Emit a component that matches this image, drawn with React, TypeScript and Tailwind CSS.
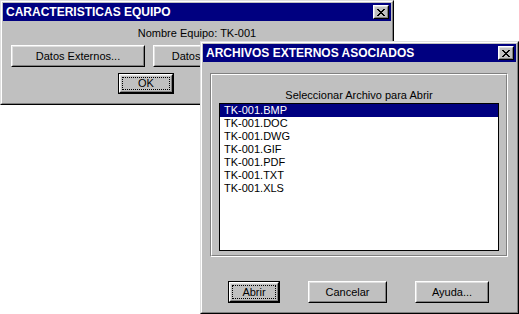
import React from "react";

function CloseBtn() {
  return (
    <div className="w-[16px] h-[14px] border border-t-white border-l-white border-r-black border-b-black bg-[#c0c0c0]">
      <div className="w-full h-full border border-t-[#dfdfdf] border-l-[#dfdfdf] border-r-[#808080] border-b-[#808080] flex items-center justify-center">
        <svg width="8" height="7" viewBox="0 0 8 7" shapeRendering="crispEdges">
          <path d="M0 0h2v1h1v1h2V1h1V0h2v1H7v1H6v1H5v1h1v1h1v1h1v1H6V6H5V5H3v1H2v1H0V6h1V5h1V4h1V3H2V2H1V1H0z" fill="#000" />
        </svg>
      </div>
    </div>
  );
}

function Win({ className, title, children }: { className: string; title: string; children: React.ReactNode }) {
  return (
    <div className={`absolute border border-t-[#dfdfdf] border-l-[#dfdfdf] border-r-black border-b-black bg-[#c0c0c0] ${className}`}>
      <div className="h-full border border-t-white border-l-white border-r-[#808080] border-b-[#808080] p-[1px] flex flex-col">
        <div className="h-[18px] shrink-0 bg-[#000080] flex items-center justify-between pl-[3px] pr-[2px]">
          <span className="text-white font-bold text-[12px] leading-[14px]">{title}</span>
          <CloseBtn />
        </div>
        <div className="flex-1 flex flex-col">{children}</div>
      </div>
    </div>
  );
}

function Button({ className, children, isDefault }: { className: string; children: React.ReactNode; isDefault?: boolean }) {
  const face = (
    <div className="w-full h-full border border-t-white border-l-white border-r-black border-b-black bg-[#c0c0c0]">
      <div className="w-full h-full border border-t-[#dfdfdf] border-l-[#dfdfdf] border-r-[#808080] border-b-[#808080] p-[1px] flex">
        {isDefault ? (
          <div className="flex-1 border border-dotted border-black flex items-center justify-center text-[11px] leading-[13px] text-black">
            {children}
          </div>
        ) : (
          <div className="flex-1 flex items-center justify-center text-[11px] leading-[13px] text-black whitespace-nowrap overflow-hidden">{children}</div>
        )}
      </div>
    </div>
  );
  if (isDefault) {
    return <div className={`shrink-0 border border-black ${className}`}>{face}</div>;
  }
  return <div className={`shrink-0 ${className}`}>{face}</div>;
}

const files = ["TK-001.BMP", "TK-001.DOC", "TK-001.DWG", "TK-001.GIF", "TK-001.PDF", "TK-001.TXT", "TK-001.XLS"];

export default function App() {
  return (
    <div className="relative w-[519px] h-[314px] bg-white overflow-hidden font-['Liberation_Sans',Arial,sans-serif]">
      <Win className="left-0 top-0 w-[394px] h-[105px]" title="CARACTERISTICAS EQUIPO">
        <div className="mt-[6px] h-[13px] text-center text-[11px] leading-[13px] text-black">Nombre Equipo: TK-001</div>
        <div className="mt-[5px] flex gap-[8px] pl-[8px]">
          <Button className="w-[134px] h-[22px]">Datos Externos...</Button>
          <Button className="w-[134px] h-[22px]">Datos Adicionales...</Button>
        </div>
        <div className="mt-[6px] flex pl-[115px]">
          <Button className="w-[56px] h-[21px]" isDefault>
            <span className="px-[6px]">OK</span>
          </Button>
        </div>
      </Win>

      <Win className="left-[200px] top-[41px] w-[319px] h-[273px]" title="ARCHIVOS EXTERNOS ASOCIADOS">
        <div className="mt-[11px] ml-[7px] w-[298px] h-[184px] border border-t-[#808080] border-l-[#808080] border-r-white border-b-white">
          <div className="w-full h-full border border-t-white border-l-white border-r-[#808080] border-b-[#808080] flex flex-col px-[7px]">
            <div className="mt-[14px] h-[13px] text-center text-[11px] leading-[13px] text-black">Seleccionar Archivo para Abrir</div>
            <div className="mt-[1px] h-[148px] border border-black bg-white flex flex-col">
              {files.map((f, i) => (
                <div
                  key={f}
                  className={`h-[13px] pl-[4px] text-[11px] leading-[13px] ${i === 0 ? "bg-[#000080] text-white" : "text-black"}`}
                >
                  {f}
                </div>
              ))}
            </div>
          </div>
        </div>
        <div className="mt-[24px] flex pl-[25px]">
          <Button className="w-[52px] h-[22px]" isDefault>
            <span className="px-[3px]">Abrir</span>
          </Button>
          <Button className="ml-[28px] w-[79px] h-[22px]">Cancelar</Button>
          <Button className="ml-[28px] w-[74px] h-[22px]">Ayuda...</Button>
        </div>
      </Win>
    </div>
  );
}
